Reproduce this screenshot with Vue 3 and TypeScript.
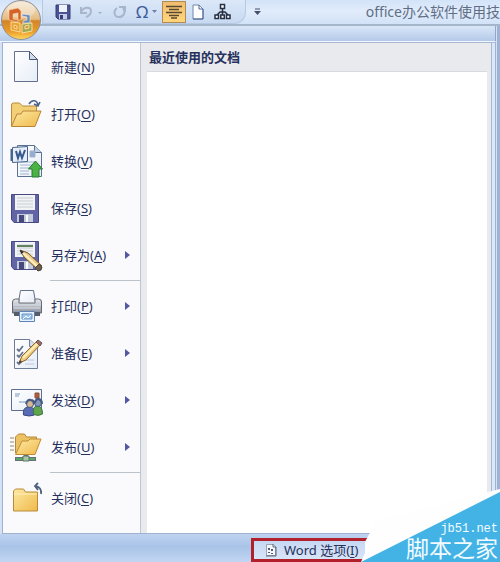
<script setup lang="ts">
interface MenuItem {
  label: string
  key: string
  icon: string
  arrow?: boolean
}

const groups: MenuItem[][] = [
  [
    { label: '新建', key: 'N', icon: 'new' },
    { label: '打开', key: 'O', icon: 'open' },
    { label: '转换', key: 'V', icon: 'convert' },
    { label: '保存', key: 'S', icon: 'save' },
    { label: '另存为', key: 'A', icon: 'saveas', arrow: true },
  ],
  [
    { label: '打印', key: 'P', icon: 'print', arrow: true },
    { label: '准备', key: 'E', icon: 'prepare', arrow: true },
    { label: '发送', key: 'D', icon: 'send', arrow: true },
    { label: '发布', key: 'U', icon: 'publish', arrow: true },
  ],
  [{ label: '关闭', key: 'C', icon: 'close' }],
]
</script>

<template>
  <div class="window">
    <svg class="defs" width="0" height="0" aria-hidden="true">
      <defs>
        <linearGradient id="folder" x1="0" y1="0" x2="1" y2="1">
          <stop offset="0" stop-color="#fde9a2" />
          <stop offset="1" stop-color="#efb94c" />
        </linearGradient>
        <linearGradient id="sheet" x1="0" y1="0" x2="1" y2="1">
          <stop offset="0" stop-color="#ffffff" />
          <stop offset="1" stop-color="#e6edf7" />
        </linearGradient>
        <linearGradient id="metal" x1="0" y1="0" x2="0" y2="1">
          <stop offset="0" stop-color="#e9ebee" />
          <stop offset="1" stop-color="#8b919d" />
        </linearGradient>
        <linearGradient id="orb" x1="0" y1="0" x2="0" y2="1">
          <stop offset="0" stop-color="#f3e6d2" />
          <stop offset=".48" stop-color="#e6bd83" />
          <stop offset=".52" stop-color="#d3852a" />
          <stop offset=".8" stop-color="#eb9c27" />
          <stop offset="1" stop-color="#ffdb62" />
        </linearGradient>
      </defs>
    </svg>

    <header class="titlebar">
      <nav class="quick" aria-label="快速访问工具栏">
        <button type="button" aria-label="保存">
          <svg width="16" height="18" viewBox="0 0 16 18">
            <path d="M1 2h14v14H3l-2-2z" fill="#4a5294" stroke="#343d79" />
            <path d="M4 2h8v7H4z" fill="#edf2fb" />
            <path d="M4 11h8v5H4z" fill="#c4cde5" />
            <path d="M5 12h3v4H5z" fill="#343d79" />
          </svg>
        </button>
        <button type="button" class="undo" aria-label="撤消">
          <svg width="24" height="18" viewBox="0 0 24 18">
            <path d="M2 4v6h6M2 9c3-6 10-5 10-1 0 3-2 5-5 6" fill="none" stroke="#a9b5ca" stroke-width="2" />
            <path d="M19 9h4l-2 2z" fill="#a0aec5" />
          </svg>
        </button>
        <button type="button" class="redo" aria-label="重复">
          <svg width="14" height="18" viewBox="0 0 14 18">
            <path d="M4 5c-4 3-3 9 2 9s7-5 4-9M6 4h6v5" fill="none" stroke="#a9b5ca" stroke-width="2" />
          </svg>
        </button>
        <button type="button" class="symbol" aria-label="符号">
          <span>Ω</span>
          <svg width="5" height="4" viewBox="0 0 5 4"><path d="M0 0h5L2.500 3z" fill="#6f80a4" /></svg>
        </button>
        <button type="button" class="active" aria-label="居中">
          <svg width="16" height="14" viewBox="0 0 16 14">
            <path d="M0 1.500h16M3 4.500h10M0 7.500h16M3 10.500h10M5 13h6" stroke="#584a32" stroke-width="1.500" />
          </svg>
        </button>
        <button type="button" class="page" aria-label="新建">
          <svg width="12" height="16" viewBox="0 0 12 16">
            <path d="M1 1h6l4 4v10H1z" fill="#fff" stroke="#7186b0" />
            <path d="M7 1v4h4v10H1" fill="none" stroke="#4d6495" />
          </svg>
        </button>
        <button type="button" class="chart" aria-label="组织结构图">
          <svg width="17" height="17" viewBox="0 0 17 17" fill="#fff" stroke="#273042" stroke-width="1.500">
            <path d="M8.500 6v7M3 12l3-3h5l3 3" fill="none" />
            <path d="M6.500 1.500h4v4h-4zM1 12h3.500v3.500H1zM6.800 12h3.500v3.500H6.800zM12.500 12H16v3.500h-3.500z" />
          </svg>
        </button>
      </nav>
      <button type="button" class="more" aria-label="自定义快速访问工具栏">
        <svg width="7" height="8" viewBox="0 0 7 8"><path d="M1 1h5" stroke="#44516b" /><path d="M0 3h7L3.500 7z" fill="#44516b" /></svg>
      </button>
      <h1>office办公软件使用技</h1>
    </header>

    <button type="button" class="orb" aria-label="Office 按钮">
      <svg width="42" height="42" viewBox="0 0 42 42">
        <circle cx="21" cy="20" r="19.500" fill="url(#orb)" stroke="#8e9099" />
        <ellipse cx="21" cy="10" rx="14" ry="8" fill="#fff" opacity=".3" />
        <path d="M9 10l9-2 3 3v9h-3v-7l-5 1v5l5 1v2l-9-2z" fill="#d4622a" stroke="#f8d6a0" stroke-width=".6" />
        <path d="M22 14l8 1v8l-7 0v-2l4-1v-3l-5-1z" fill="#6a8cb4" stroke="#eff2fa" stroke-width=".6" />
        <path d="M11 22l9 1v9l-9-2zm3 3v3l3 1v-3z" fill="#e9a234" fill-rule="evenodd" stroke="#ffe9b4" stroke-width=".8" />
        <path d="M22 24l10-1v8l-10 2zm3 2v3l4-1v-3z" fill="#a5a752" fill-rule="evenodd" stroke="#ffefb8" stroke-width=".8" />
      </svg>
    </button>

    <div class="band"></div>

    <main class="body">
      <nav class="menu" aria-label="Office 菜单">
        <ul v-for="(group, index) in groups" :key="index">
          <li v-for="item in group" :key="item.key">
            <button type="button" class="item">
              <svg class="icon" width="36" height="36" viewBox="0 0 36 36" aria-hidden="true">
                <g v-if="item.icon === 'new'">
                  <path d="M7.500 2.500h15l8 8v22h-23z" fill="url(#sheet)" stroke="#65718c" />
                  <path d="M22.500 2.500v8h8z" fill="#d2dceb" stroke="#4b5670" />
                </g>
                <g v-else-if="item.icon === 'open'">
                  <path d="M4.500 30V9q0-2 2-2h6l3 3h14v6" fill="#f3cf78" stroke="#b88c38" />
                  <path d="M4.500 30.500L10 18h4l2-3h18l-6 15.500z" fill="url(#folder)" stroke="#b88534" />
                  <path d="M22 8c3-5 8-4 9 1m-4-1l4 2 2-4" fill="none" stroke="#4b638b" stroke-width="1.600" />
                </g>
                <g v-else-if="item.icon === 'convert'">
                  <path d="M10.500 2.500h17l7 7v24h-24z" fill="url(#sheet)" stroke="#5b7191" />
                  <path d="M27.500 2.500v7h7" fill="#c1d2e8" stroke="#5b7191" />
                  <path d="M23 8h5v6h-5zM13 19h16M13 22h12M13 25h11M13 28h9M13 31h9" fill="#94acd0" stroke="#a1b4d0" />
                  <path d="M5.500 4.500l15-1v15l-15 1z" fill="#e6eef9" stroke="#46648f" />
                  <path d="M9 8l2 7 2-6 2 6 3-8" fill="none" stroke="#36588e" stroke-width="2" />
                  <path d="M4.500 6v12" stroke="#46648f" stroke-width="2" />
                  <path d="M28.500 18l7 8h-3.500v8h-7v-8h-3.500z" fill="#4bb346" stroke="#267b2f" />
                </g>
                <g v-else-if="item.icon === 'save' || item.icon === 'saveas'">
                  <path d="M4.500 4.500h27v28H7l-2.500-3z" fill="#6265a5" stroke="#464985" />
                  <path d="M8 5h20v15H8z" fill="#f1f3f5" />
                  <path d="M10 8h16M10 11h16M10 14h16M10 17h16" stroke="#c8ced2" />
                  <path d="M10 24h16v8H10z" fill="#c4cbda" />
                  <path d="M12 25h5v7h-5z" fill="#454a7a" />
                  <path d="M19 25h2v7h-2z" fill="#fff" />
                  <g v-if="item.icon === 'saveas'">
                    <path d="M10 9h16" stroke="#658260" stroke-width="2" />
                    <path d="M13 13l4 7 14 13 4-4-14-13z" fill="#edca88" stroke="#73552f" />
                    <path d="M16 16l15 14" stroke="#fff0bd" stroke-width="2" />
                    <path d="M13 13l1 4 3-2z" fill="#27293b" />
                    <path d="M28 31l3 3q4 0 4-4l-3-3z" fill="#6b604f" stroke="#4e473f" />
                  </g>
                </g>
                <g v-else-if="item.icon === 'print'">
                  <path d="M11.500 14l2-11.500h13L28.500 14" fill="url(#sheet)" stroke="#626f8d" />
                  <path d="M5.500 14q0-3 3-3H12v4h16v-4h3.500q3 0 3 3v11h-29z" fill="url(#metal)" stroke="#626975" />
                  <path d="M6 17h28M7 20h26" stroke="#d8dde5" />
                  <path d="M7 24h26v4H7z" fill="#555d68" />
                  <path d="M12.500 23.500h15v10h-15z" fill="#e6f3ff" stroke="#5f83b5" />
                  <path d="M15 26h10v5H15z" fill="#9bc7ef" stroke="#6e94c2" />
                  <path d="M16 31l3-3 2 2 3-3" fill="none" stroke="#fff" />
                </g>
                <g v-else-if="item.icon === 'prepare'">
                  <path d="M7.500 4.500h15l8 7v22h-23z" fill="url(#sheet)" stroke="#6e7c97" />
                  <path d="M22.500 4.500v7h8" fill="#d5deed" stroke="#6e7c97" />
                  <path d="M10 14l2 2 4-5M10 20l2 2 4-5M10 27l2 2 4-4" fill="none" stroke="#65718c" stroke-width="1.800" />
                  <path d="M18 25h9M18 29h9" stroke="#bac8dc" />
                  <path d="M12 28l3-7L30 6l4 3-15 16z" fill="#efca7c" stroke="#8e642f" />
                  <path d="M16 23L31 8" stroke="#fff0bb" stroke-width="2" />
                  <path d="M29 7l2-2 4 3-2 3z" fill="#a56a6a" stroke="#5e5550" />
                  <path d="M12 28l1-3 2 2z" fill="#343a4b" />
                </g>
                <g v-else-if="item.icon === 'send'">
                  <path d="M4.500 7.500h30v21h-30z" fill="url(#sheet)" stroke="#5c6e91" />
                  <path d="M8 12h5M8 14h4M12 20h9" stroke="#7795be" />
                  <path d="M28 11h4v5h-4z" fill="#b65b39" stroke="#88503c" />
                  <path d="M16.500 33q-1-7 4-8h3q5 1 4 8-5 2-11 0z" fill="#596bb5" stroke="#38477e" />
                  <path d="M26.500 32q-1-7 3-8h2q4 1 4 8-5 3-9 0z" fill="#61a44e" stroke="#3d7643" />
                  <circle cx="23" cy="22" r="3.500" fill="#d6b798" stroke="#48577c" />
                  <circle cx="31" cy="21" r="3.500" fill="#8198b9" stroke="#43577c" />
                  <path d="M19 22q1-5 5-4 3 0 3 4M28 21q1-5 4-4 3 1 3 5" fill="none" stroke="#475983" stroke-width="2" />
                </g>
                <g v-else-if="item.icon === 'publish'">
                  <path d="M8.500 24V8l3-3h6l2 3h10v4" fill="#edc262" stroke="#b88638" />
                  <path d="M8.500 25.500L15 12h6l2-2h11l-6 15.500z" fill="url(#folder)" stroke="#bf8c35" />
                  <path d="M3 9h4M3 13h4M3 17h4M3 21h4" stroke="#8c8b75" />
                  <path d="M19 26v4M8 30h21" stroke="#64717c" stroke-width="4" />
                  <path d="M9 30h7M22 30h6" stroke="#59a863" stroke-width="2" />
                  <path d="M16 27h6v5h-6z" fill="#aac6a6" stroke="#587768" />
                </g>
                <g v-else>
                  <path d="M6.500 31V11l2-2h8l2 3h12v19z" fill="url(#folder)" stroke="#b98b38" />
                  <path d="M7 14h23" stroke="#fff1ba" />
                  <path d="M34 14q1-7-6-8m3-3l-3 3 3 4" fill="none" stroke="#4e617f" stroke-width="1.800" />
                </g>
              </svg>
              <span>{{ item.label }}(<u>{{ item.key }}</u>)</span>
              <svg v-if="item.arrow" class="arrow" width="5" height="8" viewBox="0 0 5 8" aria-hidden="true">
                <path d="M0 0l5 4-5 4z" fill="#5358a2" />
              </svg>
            </button>
          </li>
        </ul>
      </nav>
      <section class="recent">
        <h2>最近使用的文档</h2>
        <div class="documents"></div>
      </section>
    </main>

    <footer class="footer">
      <button type="button" class="options">
        <svg width="12" height="14" viewBox="0 0 12 14" aria-hidden="true">
          <path d="M1.500 1.500h7l2 2v9h-9z" fill="#f5f7fa" stroke="#9aa5b6" />
          <path d="M8 1v3h3v9H1" fill="none" stroke="#59677f" />
          <path d="M3 5h2v2H3zM6 6h2v2H6zM3 9h2v1H3zM6 10h2v1H6z" fill="#505d77" />
        </svg>
        <span>Word 选项(<u>I</u>)</span>
      </button>
    </footer>

    <aside class="watermark">
      <svg width="139" height="82" viewBox="0 0 139 82" aria-hidden="true">
        <path d="M0 82L4 73V62L15 41 139 9v73z" fill="#fefefe" />
        <path d="M0 82L139 12v70z" fill="#43b3e6" />
      </svg>
      <p><span class="site">jb51.net</span><span class="name">脚本之家</span></p>
    </aside>
  </div>
</template>

<style>
body {
  margin: 0;
}
</style>

<style scoped>
.window {
  position: relative;
  display: flex;
  flex-direction: column;
  min-height: 100vh;
  overflow: hidden;
  background: linear-gradient(to left, #9fb2d6 3px, #d3e1f5 3px);
  color: #25305c;
  font-family: "Noto Sans", "Noto Sans CJK SC", sans-serif;
  font-size: 13px;
}
.defs {
  position: absolute;
}
button {
  display: flex;
  align-items: center;
  margin: 0;
  padding: 0;
  border: 0;
  background: none;
  color: inherit;
  font: inherit;
}
svg {
  display: block;
  flex: none;
}
h1,
h2,
p,
ul {
  margin: 0;
  padding: 0;
  font-weight: normal;
  list-style: none;
}
.titlebar {
  display: flex;
  align-items: center;
  height: 24px;
  padding-left: 42px;
  border-bottom: 2px solid #a5b5ca;
  background: linear-gradient(#d3e3f8, #e1ecfb 45%, #d2e2f7);
}
.quick {
  display: flex;
  align-items: center;
  box-sizing: border-box;
  height: 24px;
  padding: 0 14px 0 12px;
  border: 1px solid #b6c8e2;
  border-top: 0;
  border-radius: 0 0 12px 0;
  background: linear-gradient(#dce8f8, #c7d9f1);
}
.undo {
  margin-left: 8px;
}
.redo {
  margin-left: 10px;
}
.symbol {
  gap: 4px;
  margin-left: 9px;
  color: #3f5d9c;
  font-size: 17px;
  line-height: 22px;
}
.active {
  box-sizing: border-box;
  justify-content: center;
  width: 24px;
  height: 22px;
  margin-left: 5px;
  border: 1px solid #b28b50;
  background: linear-gradient(#f0bd70, #ffd67c);
}
.page {
  margin-left: 6px;
}
.chart {
  margin-left: 10px;
}
.more {
  margin-left: 8px;
}
h1 {
  flex: 1;
  overflow: hidden;
  color: #5f6e86;
  font-size: 14px;
  line-height: 24px;
  text-align: right;
  white-space: nowrap;
}
.orb {
  position: absolute;
  top: 0;
  left: 0;
}
.band {
  height: 15px;
  margin-right: 4px;
  border-right: 1px solid #8ea7ca;
  border-bottom: 1px solid #f0f6ff;
  background: linear-gradient(#d9e6f7, #b4cae9);
}
.body {
  display: flex;
  flex: 1;
  margin: 0 4px 0 2px;
  padding-right: 3px;
  border: 1px solid #9eb3d1;
  border-top-color: #a9b9d0;
  background: #dbe8f9;
}
.menu {
  box-sizing: border-box;
  width: 138px;
  padding-bottom: 8px;
  border-right: 1px solid #bdc5d2;
  background: #fafafc;
}
.menu ul {
  padding-bottom: 2px;
}
.menu ul + ul {
  padding-top: 2px;
  background: linear-gradient(#bcc2cb, #bcc2cb) 47px 0 / 100% 1px no-repeat;
}
.item {
  width: 100%;
  height: 47px;
  padding: 0 10px 0 4px;
  gap: 8px;
  line-height: 20px;
  text-align: left;
  white-space: nowrap;
}
.arrow {
  margin-left: auto;
}
u {
  text-underline-offset: 2px;
}
.recent {
  display: flex;
  flex: 1;
  flex-direction: column;
  padding: 0 4px 0 6px;
  border-right: 1px solid #a6b8d2;
  background: #e9eaee;
}
h2 {
  padding-left: 2px;
  font-size: 13px;
  font-weight: bold;
  line-height: 28px;
}
.documents {
  flex: 1;
  border-top: 1px solid #d7dae0;
  background: #fff;
}
.footer {
  display: flex;
  align-items: flex-end;
  justify-content: flex-end;
  height: 28px;
  background: linear-gradient(#bfd3f0, #a9c3e8 45%, #c2d6f2);
}
.options {
  box-sizing: border-box;
  width: 145px;
  height: 24px;
  margin-right: 104px;
  padding-left: 11px;
  gap: 7px;
  border: 3px solid #b0212b;
  background: linear-gradient(#c6d8f2, #d8e5f7);
  line-height: 18px;
  white-space: nowrap;
}
.watermark {
  position: absolute;
  right: 0;
  bottom: 0;
  color: #f4fbff;
}
.watermark p {
  position: absolute;
  right: 2px;
  bottom: 0;
  display: flex;
  flex-direction: column;
  align-items: flex-end;
  white-space: nowrap;
}
.site {
  font-family: "Liberation Mono", monospace;
  font-size: 12px;
  line-height: 14px;
}
.name {
  font-family: "Liberation Sans", "Noto Sans CJK SC", sans-serif;
  font-size: 23px;
  line-height: 26px;
}
</style>
